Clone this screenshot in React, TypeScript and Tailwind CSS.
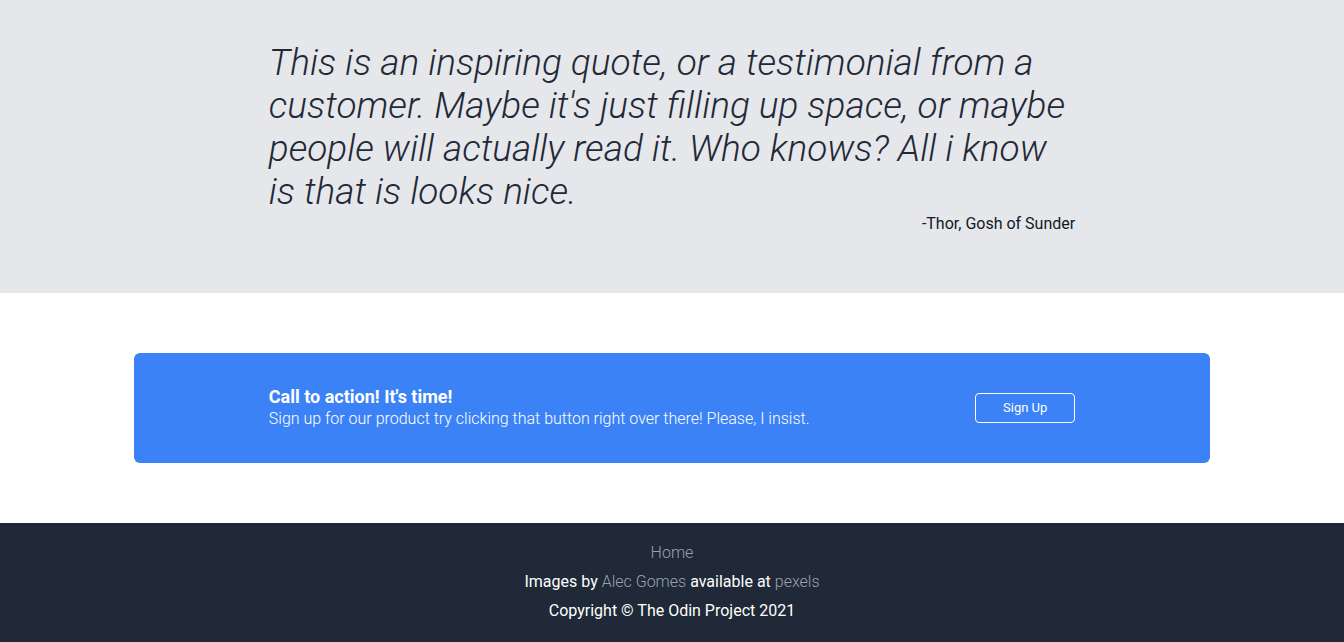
export default function App() {
  return (
    <div className="min-h-screen bg-white font-['Roboto',sans-serif]">
      {/* Quote */}
      <section className="bg-[#e5e7eb] pt-[41px] pb-[63px]">
        <div className="mx-auto w-[60%]">
          <p className="text-[37px] font-light italic leading-[normal] text-[#1f2937]">
            This is an inspiring quote, or a testimonial from a customer. Maybe it's just filling up space, or
            maybe people will actually read it. Who knows? All i know is that is looks nice.
          </p>
          <p className="mt-[5px] text-right text-base leading-3 text-[#111827]">-Thor, Gosh of Sunder</p>
        </div>
      </section>

      {/* Call to action */}
      <section className="py-[60px]">
        <div className="mx-auto flex h-[110px] w-4/5 items-center rounded-md bg-[#3b82f6]">
          <div className="mx-auto flex w-3/4 items-center justify-between">
            <div className="text-white">
              <h3 className="text-[18px] font-bold leading-[22px]">Call to action! It's time!</h3>
              <p className="text-base font-light leading-[22px]">
                Sign up for our product try clicking that button right over there! Please, I insist.
              </p>
            </div>
            <button
              type="button"
              className="h-[30px] w-[100px] rounded-[4px] border border-white text-[13px] text-white"
            >
              Sign Up
            </button>
          </div>
        </div>
      </section>

      {/* Footer */}
      <footer className="flex flex-col items-center gap-[5px] bg-[#1f2937] pt-[18px] pb-[20px] text-base leading-6 text-white">
        <a className="font-light text-[#9ca3af]">Home</a>
        <p>
          Images by <a className="font-light text-[#9ca3af]">Alec Gomes</a> available at{' '}
          <a className="font-light text-[#9ca3af]">pexels</a>
        </p>
        <p>Copyright © The Odin Project 2021</p>
      </footer>
    </div>
  );
}
